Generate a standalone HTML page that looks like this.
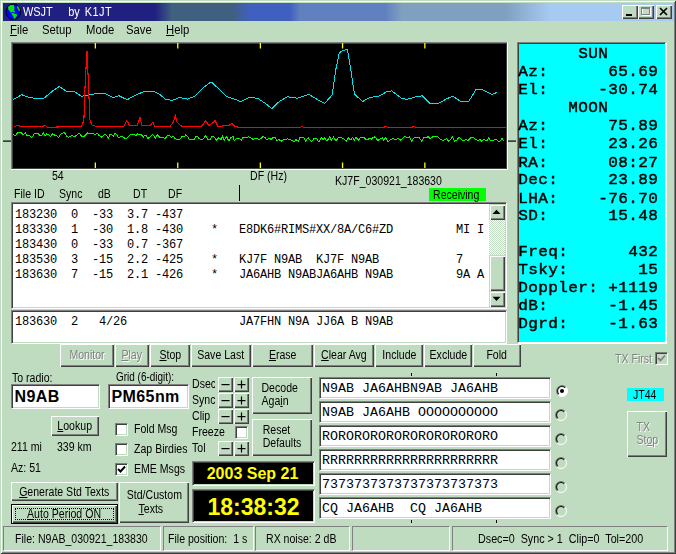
<!DOCTYPE html>
<html><head><meta charset="utf-8"><title>WSJT by K1JT</title>
<style>
html,body{margin:0;padding:0;}
body{width:676px;height:554px;background:#c0dcc0;position:relative;overflow:hidden;font-family:"Liberation Sans",sans-serif;font-size:12px;color:#000;}
.abs{position:absolute;}
#frame{left:0;top:0;width:676px;height:554px;box-sizing:border-box;box-shadow:inset 1px 1px 0 #c0dcc0,inset -1px -1px 0 #404040,inset 2px 2px 0 #fff,inset -2px -2px 0 #808080;}
#title{left:3px;top:3px;width:671px;height:18px;background:linear-gradient(to right,#202080 0,#202080 152px,#406080 169px,#406080 229px,#4060c0 247px,#4060c0 287px,#6080c0 297px,#6080c0 382px,#80a0c0 399px,#80a0c0 502px,#a6caf0 547px,#a6caf0 100%);}
#ttext{left:23px;top:4px;color:#fff;font-size:12px;line-height:16px;white-space:pre;transform-origin:0 0;transform:scaleX(.91)}
.tb{top:5px;width:16px;height:14px;background:#c0dcc0;box-shadow:inset 1px 1px 0 #fff,inset -1px -1px 0 #404040,inset -2px -2px 0 #808080;}
.lb{white-space:nowrap;line-height:14px;font-size:12px;transform-origin:0 0;transform:scaleX(.88);}
.sx{display:inline-block;white-space:nowrap;transform:scaleX(.88);}
.btn{box-sizing:border-box;background:#c0dcc0;box-shadow:inset 1px 1px 0 #fff,inset -1px -1px 0 #404040,inset -2px -2px 0 #808080;text-align:center;line-height:14px;display:flex;align-items:center;justify-content:center;}
.btn.ml{padding-bottom:2px;}
.btn.ml .sx{text-align:left;line-height:13px;}
.btn.mc .sx{text-align:center;line-height:13.5px;}
.dis,.distxt{color:#808080;text-shadow:1px 1px 0 #fff;}
.pm{width:15px;height:15px;}
.pm svg{display:block}
.sunk{box-sizing:border-box;border:1px solid;border-color:#808080 #fff #fff #808080;box-shadow:inset 1px 1px 0 #404040,inset -1px -1px 0 #c0dcc0;overflow:hidden;padding:1px;}
pre{margin:0;}
.mono{position:absolute;font-family:"Liberation Mono",monospace;font-size:12px;line-height:15px;letter-spacing:-0.2px;}
.mono.tx{font-size:13.33px;letter-spacing:0;line-height:14px}
#cpanel{left:517px;top:42px;width:150px;height:302px;box-sizing:border-box;background:#00ffff;border-style:solid;border-width:1px 2px 2px 1px;border-color:#808080 #fff #fff #808080;box-shadow:inset 1px 1px 0 #404040;}
#cpanel pre{position:absolute;left:0.2px;top:3.2px;font-family:"Liberation Mono",monospace;font-weight:normal;-webkit-text-stroke:0.5px #000;font-size:16px;line-height:20.45px;letter-spacing:0.4px;transform-origin:0 0;transform:scaleY(.88);}
.ent{background:#fff;font-weight:bold;font-size:16px;line-height:19px;padding-left:3px;white-space:nowrap;letter-spacing:0.4px}
.chk{width:13px;height:13px;box-sizing:border-box;background:#fff;border:1px solid;border-color:#808080 #fff #fff #808080;box-shadow:inset 1px 1px 0 #404040,inset -1px -1px 0 #c0dcc0;}
.chk svg{position:absolute;left:-1px;top:-1px}
.clock{background:#000;color:#ffff00;font-weight:bold;text-align:center;border-color:#808080 #fff #fff #808080;}
#sbtrack{left:488.5px;top:204px;width:16px;height:102.5px;background-color:#fff;background-image:linear-gradient(45deg,#c0dcc0 25%,transparent 25%,transparent 75%,#c0dcc0 75%),linear-gradient(45deg,#c0dcc0 25%,transparent 25%,transparent 75%,#c0dcc0 75%);background-size:2px 2px;background-position:0 0,1px 1px;}
.sbb{width:16px;background:#c0dcc0;box-sizing:border-box;box-shadow:inset 1px 1px 0 #c0dcc0,inset 2px 2px 0 #fff,inset -1px -1px 0 #404040,inset -2px -2px 0 #808080;}
.sbb svg{display:block}
.stat{box-sizing:border-box;border:1px solid;border-color:#808080 #fff #fff #808080;}
</style></head>
<body>
<div class="abs" id="frame"></div>
<div class="abs" id="title"></div>
<svg class="abs" style="left:0;top:0" width="26" height="24" viewBox="0 0 26 24">
<ellipse cx="13.3" cy="11.8" rx="7.4" ry="7.7" fill="#0000ff" stroke="#000" stroke-width="1"/>
<path d="M8.0 7.1 L10.4 5.0 L13.9 5.0 L14.5 7.7 L14.2 10.7 L15.1 11.8 L14.5 12.7 L12.7 11.8 L10.9 12.7 L9.8 11.2 L8.3 9.5 Z" fill="#00e800"/>
<path d="M16.9 5.9 L18.3 6.5 L19.8 9.5 L19.8 11.8 L18.3 10.1 L17.2 7.7 Z" fill="#00e800"/>
<path d="M11.5 12.7 L13.6 13.3 L17.2 14.5 L16.9 16.0 L15.7 17.5 L14.8 18.9 L13.9 18.6 L13.3 16.3 L11.8 14.8 Z" fill="#00e800"/>
</svg>
<div class="abs" id="ttext">WSJT<span style="display:inline-block;width:17px"></span>by<span style="display:inline-block;width:5.5px"></span><span style="letter-spacing:0.5px">K1JT</span></div>
<div class="abs tb" style="left:622px"><svg width="16" height="14"><rect x="4" y="9" width="6" height="2" fill="#000"/></svg></div>
<div class="abs tb" style="left:638px"><svg width="16" height="14"><rect x="4.5" y="3.5" width="8" height="7" fill="none" stroke="#fff"/><rect x="3.5" y="2.5" width="8" height="7" fill="none" stroke="#808080"/><rect x="3.5" y="3" width="8" height="1" fill="#808080"/></svg></div>
<div class="abs tb" style="left:656px"><svg width="16" height="14"><path d="M4 3 L11 10 M11 3 L4 10" stroke="#000" stroke-width="1.7" fill="none"/></svg></div>
<div class="abs lb" style="left:10px;top:23px;transform:scaleX(.94);"><u>F</u>ile</div>
<div class="abs lb" style="left:42px;top:23px;transform:scaleX(.94);">Setup</div>
<div class="abs lb" style="left:86px;top:23px;transform:scaleX(.94);">Mode</div>
<div class="abs lb" style="left:126px;top:23px;transform:scaleX(.94);">Save</div>
<div class="abs lb" style="left:166px;top:23px;transform:scaleX(.94);"><u>H</u>elp</div>
<svg class="abs" style="left:0;top:0" width="676" height="200" viewBox="0 0 676 200">
<rect x="11" y="42" width="497" height="128" fill="#fff"/>
<rect x="11" y="42" width="496" height="127" fill="#808080"/>
<rect x="12" y="43" width="495" height="126" fill="#404040"/>
<rect x="13" y="44" width="493" height="124" fill="#000"/>
<rect x="94.7" y="43" width="1.3" height="5.5" fill="#ffff00"/><rect x="94.7" y="162.5" width="1.3" height="5.5" fill="#ffff00"/><rect x="177.1" y="43" width="1.3" height="5.5" fill="#ffff00"/><rect x="177.1" y="162.5" width="1.3" height="5.5" fill="#ffff00"/><rect x="259.7" y="43" width="1.3" height="5.5" fill="#ffff00"/><rect x="259.7" y="162.5" width="1.3" height="5.5" fill="#ffff00"/><rect x="341.9" y="43" width="1.3" height="5.5" fill="#ffff00"/><rect x="341.9" y="162.5" width="1.3" height="5.5" fill="#ffff00"/><rect x="424.2" y="43" width="1.3" height="5.5" fill="#ffff00"/><rect x="424.2" y="162.5" width="1.3" height="5.5" fill="#ffff00"/>
<polyline shape-rendering="crispEdges" fill="none" stroke="#00e4ec" stroke-width="1" points="12.8,99.8 21.7,94.7 27.6,97.0 33.5,98.2 44.0,98.2 53.4,90.4 59.3,86.5 66.3,91.1 74.5,91.6 81.6,96.3 87.4,95.1 96.8,93.5 105.0,93.5 113.2,97.5 119.0,95.8 127.3,99.8 130.0,98.2 137.0,94.4 144.0,91.6 153.5,91.1 159.3,94.0 165.2,99.1 172.2,100.5 179.3,97.5 187.5,99.1 194.5,96.3 202.7,88.1 211.0,81.8 218.0,88.1 226.2,96.3 233.2,98.7 240.7,101.5 249.7,97.0 258.2,98.7 265.3,103.4 271.8,108.5 279.3,101.5 287.5,96.8 297.0,98.2 308.7,94.4 318.0,99.8 324.6,103.4 332.1,95.1 335.6,70.5 339.2,52.9 342.7,50.6 347.4,49.4 350.9,70.5 354.4,94.0 362.6,101.5 369.7,97.5 380.0,95.8 385.9,92.1 391.7,90.9 401.1,98.0 407.0,99.4 415.2,97.0 422.2,95.8 430.4,103.8 437.5,104.0 446.9,98.7 452.7,96.3 461.0,101.5 468.7,101.5 476.2,89.3 483.2,90.0 492.2,94.4 497.3,92.3"/>
<polyline shape-rendering="crispEdges" fill="none" stroke="#ff0000" stroke-width="1.1" points="14.7,126.8 17.0,125.2 20.6,126.3 42.8,126.3 44.7,125.2 47.5,127.3 81.6,126.3 83.9,119.8 85.0,87.0 87.0,50.6 88.6,87.0 89.8,119.8 92.0,125.0 95.6,126.3 123.8,126.3 126.8,120.5 129.7,125.6 137.0,125.6 140.1,117.4 141.7,125.6 150.0,125.6 152.8,122.1 154.6,126.3 170.0,126.3 173.4,122.1 175.3,115.6 177.0,122.1 181.6,126.3 201.6,126.3 205.8,120.5 208.6,125.6 212.0,123.3 215.0,120.5 218.0,126.3 228.5,125.6 232.0,123.3 235.6,126.8 240.0,127.3 260.0,127.3 300.0,127.3 302.0,126.6 304.0,127.3 340.0,127.3 384.0,127.3 386.0,126.5 388.0,127.3 412.0,127.3 414.0,126.5 416.0,127.3 506.0,127.3"/>
<polyline shape-rendering="crispEdges" fill="none" stroke="#00ff00" stroke-width="1" points="13.0,134.1 14.5,135.8 15.9,135.2 17.7,132.7 19.6,132.6 21.5,132.8 22.9,134.6 25.3,133.0 26.9,135.7 29.4,135.4 31.2,137.5 32.6,136.9 34.3,133.2 35.7,134.0 38.1,133.3 40.1,135.7 41.9,135.2 43.3,132.7 44.9,135.9 46.7,134.0 48.8,134.8 50.5,136.5 52.7,133.7 54.7,135.1 57.2,136.2 58.8,137.5 60.3,134.6 62.6,133.2 64.5,132.7 66.7,136.5 68.7,137.1 70.4,136.1 72.5,135.6 74.4,136.9 76.9,135.1 79.1,133.0 81.3,136.0 83.9,137.0 85.6,134.7 87.7,132.9 89.6,133.6 91.1,133.1 93.4,133.5 95.0,134.9 97.4,133.3 99.3,135.7 101.8,137.2 104.2,134.5 106.0,134.9 108.5,138.1 110.0,134.1 111.6,134.4 113.5,136.3 115.1,133.3 117.0,135.2 119.0,138.3 121.2,136.1 123.3,137.0 124.7,138.2 127.0,138.1 129.4,135.7 131.2,134.2 133.3,134.1 134.7,134.9 136.2,135.6 137.6,133.8 139.1,134.4 140.8,134.1 143.3,137.2 144.8,135.3 146.5,135.9 148.0,138.5 150.6,136.6 152.5,134.6 153.9,136.0 155.6,138.5 157.1,134.4 159.6,137.1 161.1,137.2 162.4,137.1 165.0,138.9 167.2,135.8 169.0,135.4 171.3,137.3 173.6,136.3 175.2,138.9 177.8,139.2 180.1,139.0 182.4,136.0 184.4,136.7 185.7,135.0 187.4,136.3 189.6,139.9 191.4,139.9 194.0,140.0 195.8,136.3 197.4,136.2 199.0,138.4 201.4,139.6 203.4,138.7 205.7,135.8 207.9,140.1 210.2,139.3 212.1,136.4 214.4,137.2 216.8,140.6 218.6,137.7 221.1,139.4 222.6,136.3 224.1,140.4 226.5,136.5 228.8,140.9 231.0,137.6 233.0,136.5 234.3,140.9 236.5,138.7 239.0,138.2 241.4,140.3 243.0,137.4 244.7,137.3 246.7,137.5 248.6,136.9 251.1,138.1 253.0,139.3 255.4,138.5 257.9,139.0 259.9,139.1 261.3,138.7 262.8,136.4 265.1,137.3 267.0,140.2 269.1,138.2 271.0,139.4 273.4,137.1 275.4,137.8 277.1,140.6 279.0,139.5 281.3,141.3 283.2,139.8 285.1,139.3 287.3,139.0 289.3,139.1 291.8,140.3 294.3,141.6 295.9,139.6 298.5,141.1 299.9,137.4 301.8,137.1 303.4,137.1 305.6,140.9 308.1,137.6 310.3,140.3 311.8,141.4 314.3,138.0 316.9,138.9 318.8,142.0 321.2,137.7 323.0,139.6 324.8,137.9 326.5,140.6 327.8,139.8 329.7,137.0 331.4,140.1 333.4,137.2 336.0,140.9 338.5,137.4 340.2,137.0 342.5,138.2 344.0,139.0 346.4,141.1 348.1,137.6 350.6,139.8 352.8,137.3 354.2,140.4 356.0,137.2 358.5,140.1 360.9,137.2 363.3,137.1 365.7,139.1 367.5,139.6 370.0,138.1 371.4,139.5 373.0,137.3 374.5,137.0 376.1,138.3 377.8,140.7 379.5,139.3 381.0,138.5 382.3,138.0 383.7,140.5 385.7,137.6 387.6,141.5 389.0,140.9 390.9,139.2 393.3,138.6 395.2,140.1 397.8,138.3 400.2,140.2 402.3,138.6 404.1,136.8 405.5,136.9 407.8,137.8 409.3,136.9 411.7,141.0 413.9,137.9 415.5,137.9 417.4,137.2 419.3,137.7 421.8,141.4 423.8,137.6 426.4,137.9 428.2,136.3 430.0,138.8 431.9,137.3 433.9,136.3 435.5,136.7 437.3,136.4 438.7,137.8 440.3,139.2 442.2,140.1 444.4,140.0 446.8,138.4 448.6,141.5 450.1,140.2 452.2,136.7 454.6,141.1 456.7,140.3 459.1,137.3 461.0,139.2 463.4,140.8 465.8,139.7 468.3,140.3 470.5,138.0 471.8,137.5 473.6,137.4 476.0,139.8 478.1,140.2 480.3,139.5 481.6,141.1 483.8,139.6 485.8,140.5 487.2,140.9 488.8,137.5 490.5,140.9 492.1,141.0 494.6,139.8 496.4,139.7 498.6,141.3 500.7,140.7 502.1,138.1 503.7,141.3"/>
<rect x="3" y="140.5" width="8" height="1.2" fill="#000"/>
<rect x="508" y="140.5" width="8" height="1.2" fill="#000"/>
</svg>
<div class="abs" id="cpanel"><pre>      SUN
Az:      65.69
El:     -30.74
     MOON
Az:      75.89
El:      23.26
RA:      08:27
Dec:     23.89
LHA:    -76.70
SD:      15.48

Freq:      432
Tsky:       15
Doppler: +1119
dB:      -1.45
Dgrd:    -1.63</pre></div>
<div class="abs lb" style="left:52px;top:169px;">54</div>
<div class="abs lb" style="left:249.5px;top:169px;">DF (Hz)</div>
<div class="abs lb" style="left:335px;top:174px;">KJ7F_030921_183630</div>
<div class="abs" style="left:429px;top:188px;width:57px;height:13px;background:#00ff00"></div>
<div class="abs lb" style="left:432.5px;top:187.5px;">Receiving</div>
<div class="abs lb" style="left:14px;top:187px;">File ID</div>
<div class="abs lb" style="left:59px;top:187px;">Sync</div>
<div class="abs lb" style="left:97.5px;top:187px;">dB</div>
<div class="abs lb" style="left:132.5px;top:187px;">DT</div>
<div class="abs lb" style="left:168px;top:187px;">DF</div>
<div class="abs" style="left:239px;top:184.5px;width:1.4px;height:16px;background:#000"></div>
<div class="abs sunk" style="left:11px;top:202px;width:496px;height:107px;background:#fff"><pre class="mono" style="left:3px;top:4.5px">183230  0  -33  3.7 -437
183330  1  -30  1.8 -430    *   E8DK6#RIMS#XX/8A/C6#ZD         MI I
183430  0  -33  0.7 -367
183530  3  -15  2.2 -425    *   KJ7F N9AB  KJ7F N9AB           7
183630  7  -15  2.1 -426    *   JA6AHB N9ABJA6AHB N9AB         9A A</pre></div>
<div class="abs" id="sbtrack"></div>
<div class="abs sbb" style="left:488.5px;top:204px;height:15.5px"><svg width="16" height="15"><path d="M3.5 10 L11.5 10 L7.5 5.8 Z" fill="#000"/></svg></div>
<div class="abs sbb" style="left:488.5px;top:254.5px;height:36px"></div>
<div class="abs sbb" style="left:488.5px;top:291px;height:15.5px"><svg width="16" height="15"><path d="M3.5 5.8 L11.5 5.8 L7.5 10 Z" fill="#000"/></svg></div>
<div class="abs sunk" style="left:11px;top:310px;width:496px;height:34px;background:#fff"><pre class="mono" style="left:3px;top:4px">183630  2   4/26                JA7FHN N9A JJ6A B N9AB</pre></div>
<div class="abs btn dis" style="left:60px;top:344px;width:54px;height:22.6px;"><span class="sx">Monitor</span></div>
<div class="abs btn dis" style="left:115px;top:344px;width:34px;height:22.6px;"><span class="sx"><u>P</u>lay</span></div>
<div class="abs btn " style="left:150px;top:344px;width:40px;height:22.6px;"><span class="sx"><u>S</u>top</span></div>
<div class="abs btn " style="left:191px;top:344px;width:60px;height:22.6px;"><span class="sx">Save Last</span></div>
<div class="abs btn " style="left:252px;top:344px;width:61px;height:22.6px;"><span class="sx"><u>E</u>rase</span></div>
<div class="abs btn " style="left:314px;top:344px;width:60px;height:22.6px;"><span class="sx"><u>C</u>lear Avg</span></div>
<div class="abs btn " style="left:375px;top:344px;width:48px;height:22.6px;"><span class="sx">Include</span></div>
<div class="abs btn " style="left:424px;top:344px;width:48px;height:22.6px;"><span class="sx">Exclude</span></div>
<div class="abs btn " style="left:473px;top:344px;width:48px;height:22.6px;"><span class="sx">Fold</span></div>
<div class="abs lb distxt" style="left:615px;top:352px;">TX First</div>
<div class="abs chk" style="left:655px;top:352px;background:#c0dcc0"><svg width="13" height="13"><path d="M3 6 L5.5 8.5 L10 3.5" stroke="#808080" stroke-width="1.8" fill="none"/></svg></div>
<div class="abs lb" style="left:12px;top:371px;">To radio:</div>
<div class="abs lb" style="left:115.5px;top:370px;transform:scaleX(.83);">Grid (6-digit):</div>
<div class="abs sunk ent" style="left:10.5px;top:384px;width:89.5px;height:24.5px;padding-top:2px"><span>N9AB</span></div>
<div class="abs sunk ent" style="left:107.5px;top:384px;width:81.5px;height:24.5px;padding-top:2px"><span>PM65nm</span></div>
<div class="abs btn " style="left:51px;top:416px;width:48px;height:20px;"><span class="sx"><u>L</u>ookup</span></div>
<div class="abs lb" style="left:11px;top:440px;">211 mi</div>
<div class="abs lb" style="left:57px;top:440px;">339 km</div>
<div class="abs lb" style="left:11px;top:461px;">Az: 51</div>
<div class="abs chk" style="left:115px;top:423px"></div>
<div class="abs lb" style="left:133.5px;top:422px;">Fold Msg</div>
<div class="abs chk" style="left:115px;top:443px"></div>
<div class="abs lb" style="left:133.5px;top:442px;">Zap Birdies</div>
<div class="abs chk" style="left:115px;top:463px"><svg width="13" height="13"><path d="M3 6 L5.5 8.5 L10 3.5" stroke="#000" stroke-width="1.9" fill="none"/></svg></div>
<div class="abs lb" style="left:133.5px;top:462px;">EME Msgs</div>
<div class="abs lb" style="left:192px;top:377px;width:26px;overflow:hidden;">Dsec</div>
<div class="abs btn pm" style="left:218px;top:377px"><svg width="15" height="15"><rect x="3.5" y="7" width="8" height="1.2" fill="#000"/></svg></div>
<div class="abs btn pm" style="left:234px;top:377px"><svg width="15" height="15"><rect x="3.5" y="7" width="8" height="1.2" fill="#000"/><rect x="6.9" y="3.5" width="1.2" height="8" fill="#000"/></svg></div>
<div class="abs lb" style="left:192px;top:393px;width:26px;overflow:hidden;">Sync</div>
<div class="abs btn pm" style="left:218px;top:393px"><svg width="15" height="15"><rect x="3.5" y="7" width="8" height="1.2" fill="#000"/></svg></div>
<div class="abs btn pm" style="left:234px;top:393px"><svg width="15" height="15"><rect x="3.5" y="7" width="8" height="1.2" fill="#000"/><rect x="6.9" y="3.5" width="1.2" height="8" fill="#000"/></svg></div>
<div class="abs lb" style="left:192px;top:409px;">Clip</div>
<div class="abs btn pm" style="left:218px;top:409px"><svg width="15" height="15"><rect x="3.5" y="7" width="8" height="1.2" fill="#000"/></svg></div>
<div class="abs btn pm" style="left:234px;top:409px"><svg width="15" height="15"><rect x="3.5" y="7" width="8" height="1.2" fill="#000"/><rect x="6.9" y="3.5" width="1.2" height="8" fill="#000"/></svg></div>
<div class="abs lb" style="left:192px;top:425px;">Freeze</div>
<div class="abs lb" style="left:192px;top:441px;">Tol</div>
<div class="abs btn pm" style="left:218px;top:441px"><svg width="15" height="15"><rect x="3.5" y="7" width="8" height="1.2" fill="#000"/></svg></div>
<div class="abs btn pm" style="left:234px;top:441px"><svg width="15" height="15"><rect x="3.5" y="7" width="8" height="1.2" fill="#000"/><rect x="6.9" y="3.5" width="1.2" height="8" fill="#000"/></svg></div>
<div class="abs chk" style="left:235px;top:426px"></div>
<div class="abs btn ml" style="left:252px;top:377px;width:60px;height:37px;padding-right:4px;"><span class="sx">Decode<br>Aga<u>i</u>n</span></div>
<div class="abs btn ml" style="left:252px;top:419px;width:60px;height:37px;"><span class="sx">Reset<br>Defaults</span></div>
<div class="abs sunk clock" style="left:192px;top:461px;width:123px;height:25px;font-size:16px;line-height:21px;padding-right:3px">2003 Sep 21</div>
<div class="abs sunk clock" style="left:192px;top:489px;width:123px;height:34px;font-size:23px;line-height:32px">18:38:32</div>
<div class="abs btn " style="left:11px;top:482px;width:107px;height:19px;"><span class="sx"><u>G</u>enerate Std Texts</span></div>
<div class="abs" style="left:11px;top:504px;width:107px;height:19.5px;background:#000"></div>
<div class="abs btn focus" style="left:12px;top:505px;width:105px;height:17.5px;"><span class="sx"><u>A</u>uto Period ON</span></div>
<div class="abs" style="left:15px;top:508px;width:97px;height:10px;border:1px dotted #000"></div>
<div class="abs btn mc" style="left:119px;top:482px;width:70px;height:41px;"><span class="sx">Std/Custom<br><span style="position:relative;left:-4px"><u>T</u>exts</span></span></div>
<div class="abs sunk" style="left:319px;top:377px;width:232px;height:22px;background:#fff"><pre class="mono tx" style="left:2px;top:4px">N9AB JA6AHBN9AB JA6AHB</pre></div>
<svg class="abs" style="left:556px;top:385px" width="12" height="12"><circle cx="6" cy="6" r="5.5" fill="#fff"/><path d="M2.1 9.9 A5.5 5.5 0 0 1 9.9 2.1" fill="none" stroke="#808080" stroke-width="1"/><path d="M2.8 9.2 A4.5 4.5 0 0 1 9.2 2.8" fill="none" stroke="#202020" stroke-width="1.3"/><path d="M9.9 2.1 A5.5 5.5 0 0 1 2.1 9.9" fill="none" stroke="#fff" stroke-width="1"/><circle cx="6" cy="6" r="2" fill="#000"/></svg>
<div class="abs sunk" style="left:319px;top:401px;width:232px;height:22px;background:#fff"><pre class="mono tx" style="left:2px;top:4px">N9AB JA6AHB OOOOOOOOOO</pre></div>
<svg class="abs" style="left:555px;top:409px" width="12" height="12"><circle cx="6" cy="6" r="5.5" fill="#c0dcc0"/><path d="M2.1 9.9 A5.5 5.5 0 0 1 9.9 2.1" fill="none" stroke="#808080" stroke-width="1"/><path d="M2.8 9.2 A4.5 4.5 0 0 1 9.2 2.8" fill="none" stroke="#202020" stroke-width="1.3"/><path d="M9.9 2.1 A5.5 5.5 0 0 1 2.1 9.9" fill="none" stroke="#fff" stroke-width="1"/></svg>
<div class="abs sunk" style="left:319px;top:425px;width:232px;height:22px;background:#fff"><pre class="mono tx" style="left:2px;top:4px">RORORORORORORORORORORO</pre></div>
<svg class="abs" style="left:555px;top:433px" width="12" height="12"><circle cx="6" cy="6" r="5.5" fill="#c0dcc0"/><path d="M2.1 9.9 A5.5 5.5 0 0 1 9.9 2.1" fill="none" stroke="#808080" stroke-width="1"/><path d="M2.8 9.2 A4.5 4.5 0 0 1 9.2 2.8" fill="none" stroke="#202020" stroke-width="1.3"/><path d="M9.9 2.1 A5.5 5.5 0 0 1 2.1 9.9" fill="none" stroke="#fff" stroke-width="1"/></svg>
<div class="abs sunk" style="left:319px;top:449px;width:232px;height:22px;background:#fff"><pre class="mono tx" style="left:2px;top:4px">RRRRRRRRRRRRRRRRRRRRRR</pre></div>
<svg class="abs" style="left:555px;top:457px" width="12" height="12"><circle cx="6" cy="6" r="5.5" fill="#c0dcc0"/><path d="M2.1 9.9 A5.5 5.5 0 0 1 9.9 2.1" fill="none" stroke="#808080" stroke-width="1"/><path d="M2.8 9.2 A4.5 4.5 0 0 1 9.2 2.8" fill="none" stroke="#202020" stroke-width="1.3"/><path d="M9.9 2.1 A5.5 5.5 0 0 1 2.1 9.9" fill="none" stroke="#fff" stroke-width="1"/></svg>
<div class="abs sunk" style="left:319px;top:473px;width:232px;height:22px;background:#fff"><pre class="mono tx" style="left:2px;top:4px">7373737373737373737373</pre></div>
<svg class="abs" style="left:555px;top:481px" width="12" height="12"><circle cx="6" cy="6" r="5.5" fill="#c0dcc0"/><path d="M2.1 9.9 A5.5 5.5 0 0 1 9.9 2.1" fill="none" stroke="#808080" stroke-width="1"/><path d="M2.8 9.2 A4.5 4.5 0 0 1 9.2 2.8" fill="none" stroke="#202020" stroke-width="1.3"/><path d="M9.9 2.1 A5.5 5.5 0 0 1 2.1 9.9" fill="none" stroke="#fff" stroke-width="1"/></svg>
<div class="abs sunk" style="left:319px;top:497px;width:232px;height:22px;background:#fff"><pre class="mono tx" style="left:2px;top:4px">CQ JA6AHB  CQ JA6AHB</pre></div>
<svg class="abs" style="left:555px;top:505px" width="12" height="12"><circle cx="6" cy="6" r="5.5" fill="#c0dcc0"/><path d="M2.1 9.9 A5.5 5.5 0 0 1 9.9 2.1" fill="none" stroke="#808080" stroke-width="1"/><path d="M2.8 9.2 A4.5 4.5 0 0 1 9.2 2.8" fill="none" stroke="#202020" stroke-width="1.3"/><path d="M9.9 2.1 A5.5 5.5 0 0 1 2.1 9.9" fill="none" stroke="#fff" stroke-width="1"/></svg>
<div class="abs" style="left:411px;top:373px;width:1px;height:3px;background:#000"></div>
<div class="abs" style="left:411px;top:520px;width:1px;height:3px;background:#000"></div>
<div class="abs" style="left:496px;top:373px;width:1px;height:3px;background:#000"></div>
<div class="abs" style="left:496px;top:520px;width:1px;height:3px;background:#000"></div>
<div class="abs" style="left:627px;top:388px;width:37px;height:13px;background:#00ffff"></div>
<div class="abs lb" style="left:633px;top:387.5px;">JT44</div>
<div class="abs btn ml dis" style="left:627px;top:411px;width:40px;height:46px;padding-bottom:0;"><span class="sx">TX<br>St<u>o</u>p</span></div>
<div class="abs stat" style="left:3px;top:526px;width:158px;height:25px"></div>
<div class="abs stat" style="left:163px;top:526px;width:91px;height:25px"></div>
<div class="abs stat" style="left:255px;top:526px;width:95px;height:25px"></div>
<div class="abs stat" style="left:352px;top:526px;width:98px;height:25px"></div>
<div class="abs stat" style="left:452px;top:526px;width:216px;height:25px"></div>
<div class="abs lb" style="left:15px;top:531.5px;">File: N9AB_030921_183830</div>
<div class="abs lb" style="left:168px;top:531.5px;">File position:&nbsp; 1 s</div>
<div class="abs lb" style="left:266px;top:531.5px;">RX noise: 2 dB</div>
<div class="abs lb" style="left:477.5px;top:531.5px;transform:scaleX(.895);">Dsec=0&nbsp; Sync &gt; 1&nbsp; Clip=0&nbsp; Tol=200</div>
</body></html>
